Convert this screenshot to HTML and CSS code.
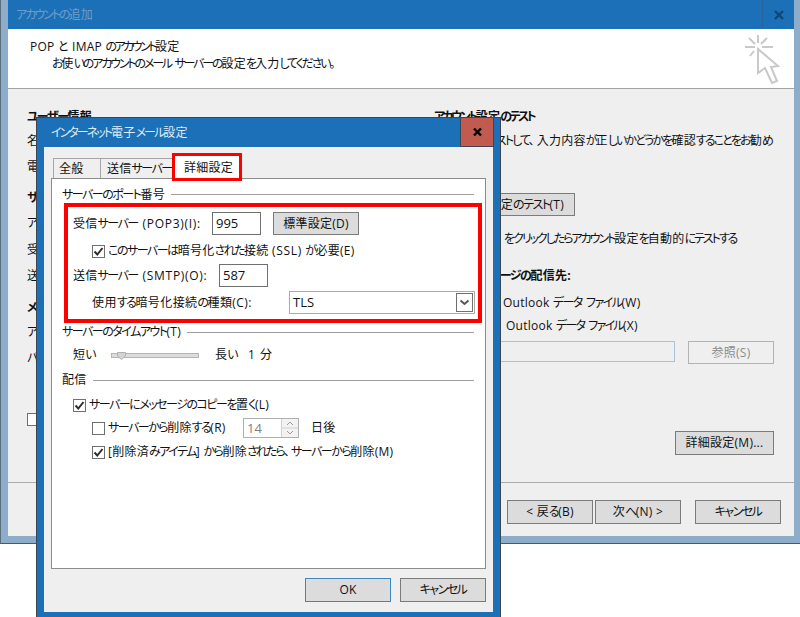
FILE: index.html
```html
<!DOCTYPE html>
<html lang="ja">
<head>
<meta charset="utf-8">
<title>アカウントの追加</title>
<link rel="stylesheet" href="styles.css">
</head>
<body>
<div class="desktop">
  <section class="window back">
    <header class="back-title">
      <span class="back-title-text"><span class="k">アカウントの</span>追加</span>
      <span class="back-close">
        <svg width="10" height="10" viewBox="0 0 10 10"><path d="M1 1L9 9M9 1L1 9" class="x-dim"/></svg>
      </span>
    </header>
    <div class="back-head">
      <div class="back-head-text">
        <div class="head-main">POP と IMAP <span class="k">のアカウント</span>設定</div>
        <div class="head-sub"><span class="k">お</span>使<span class="k">いのアカウントのメール サーバーの</span>設定<span class="k">を</span>入力<span class="k">してください。</span></div>
      </div>
      <svg class="wizard-icon" width="36" height="52" viewBox="0 0 36 52">
        <path class="ray" d="M14 0V8M1 12H11M18 12H29M5 3L11 9M23 3L17 9M6 21L10 16"/>
        <path class="cursor" d="M14 14V38L21 33L28 48L33 46L27 32L34 31Z"/>
      </svg>
    </div>
    <div class="back-body">
      <div class="back-left">
        <div class="bl bold"><span class="k">ユーザー</span>情報</div>
        <div class="bl">名</div>
        <div class="bl">電</div>
        <div class="bl bold">サ</div>
        <div class="bl">ア</div>
        <div class="bl">受</div>
        <div class="bl">送</div>
        <div class="bl bold">メ</div>
        <div class="bl">ア</div>
        <div class="bl">パ</div>
        <div class="bl"><span class="check"></span></div>
      </div>
      <div class="back-right">
        <div class="br bold br-test"><span class="k">アカウント</span>設定<span class="k">のテスト</span></div>
        <div class="br br-rec"><span class="k comma">ストして、</span>入力内容<span class="k">が</span>正<span class="k">しいかどうかを</span>確認<span class="k">することをお</span>勧<span class="k">め</span></div>
        <div class="br br-btn"><span class="btn btn-test"><span>定<span class="k">のテスト</span>(T)</span></span></div>
        <div class="br br-auto"><span class="k">をクリックしたらアカウント</span>設定<span class="k">を</span>自動的<span class="k">にテストする</span></div>
        <div class="br br-dest bold"><span class="k">ージの</span>配信先:</div>
        <div class="br br-new">Outlook <span class="k">データ ファイル</span>(W)</div>
        <div class="br br-old">Outlook <span class="k">データ ファイル</span>(X)</div>
        <div class="br br-browse">
          <span class="browse-input"></span>
          <span class="btn btn-disabled"><span>参照(S)</span></span>
        </div>
        <div class="br br-more"><span class="btn btn-more"><span>詳細設定(M)...</span></span></div>
      </div>
    </div>
    <footer class="back-foot">
      <span class="btn btn-nav"><span>&lt; 戻<span class="k">る</span>(B)</span></span>
      <span class="btn btn-nav"><span>次<span class="k">へ</span>(N) &gt;</span></span>
      <span class="btn btn-nav btn-cancel"><span class="k">キャンセル</span></span>
    </footer>
  </section>

  <section class="window dialog">
    <header class="dlg-title">
      <span class="dlg-title-text"><span class="k">インターネット</span>電子<span class="k">メール</span>設定</span>
      <span class="dlg-close">
        <svg width="11" height="10" viewBox="0 0 11 10"><path d="M2 1.5L9 8.5M9 1.5L2 8.5" class="x-dark"/></svg>
      </span>
    </header>
    <div class="dlg-client">
      <nav class="tabs">
        <span class="tab tab-general">全般</span>
        <span class="tab tab-smtp"><span>送信<span class="k">サーバー</span></span></span>
        <span class="tab tab-active">詳細設定</span>
        <span class="tab-mark"></span>
      </nav>
      <div class="page">
        <div class="group-head"><span><span class="k">サーバーのポート</span>番号</span><i></i></div>
        <div class="redbox">
          <div class="row row-in">
            <span class="lab lab-in">受信<span class="k">サーバー</span> <span class="l">(POP3)(I):</span></span>
            <span class="input">995</span>
            <span class="btn btn-default"><span>標準設定(D)</span></span>
          </div>
          <div class="row row-ssl">
            <span class="check on"><svg width="13" height="13" viewBox="0 0 13 13"><path class="tick" d="M2.5 6.5L5.3 9.5L10.5 3"/></svg></span>
            <span class="check-label"><span class="k">このサーバーは</span>暗号化<span class="k">された</span>接続 <span class="l">(SSL)</span> <span class="k">が</span>必要(E)</span>
          </div>
          <div class="row row-out">
            <span class="lab lab-out">送信<span class="k">サーバー</span> <span class="l">(SMTP)(O):</span></span>
            <span class="input">587</span>
          </div>
          <div class="row row-enc">
            <span class="lab lab-enc">使用<span class="k">する</span>暗号化接続<span class="k">の</span>種類(C):</span>
            <span class="select">
              <span class="select-value">TLS</span>
              <span class="select-arrow"><svg width="11" height="7" viewBox="0 0 11 7"><path class="chev" d="M1.5 1.5L5.5 5L9.5 1.5"/></svg></span>
            </span>
          </div>
        </div>
        <div class="group-head"><span><span class="k">サーバーのタイムアウト</span>(T)</span><i></i></div>
        <div class="row row-time">
          <span class="lab lab-short">短<span class="k">い</span></span>
          <span class="slider"><svg class="thumb" width="9" height="8" viewBox="0 0 9 8"><path d="M.5.5H8.5V4L4.5 7.5L.5 4Z"/></svg></span>
          <span class="lab-long">長<span class="k">い</span></span>
          <span class="lab-min">1 分</span>
        </div>
        <div class="group-head head-deliver"><span>配信</span><i></i></div>
        <div class="row row-copy">
          <span class="check on"><svg width="13" height="13" viewBox="0 0 13 13"><path class="tick" d="M2.5 6.5L5.3 9.5L10.5 3"/></svg></span>
          <span class="check-label"><span class="k">サーバーにメッセージのコピーを</span>置<span class="k">く</span>(L)</span>
        </div>
        <div class="row row-del">
          <span class="check"></span>
          <span class="check-label label-del"><span class="k">サーバーから</span>削除<span class="k">する</span>(R)</span>
          <span class="spin">
            <span class="spin-value">14</span>
            <span class="spin-btns">
              <svg width="16" height="18" viewBox="0 0 16 18"><path class="spin-chev" d="M5 6L8 3L11 6M5 12L8 15L11 12"/><path class="spin-sep" d="M0 9H16"/></svg>
            </span>
          </span>
          <span class="days">日後</span>
        </div>
        <div class="row row-deleted">
          <span class="check on"><svg width="13" height="13" viewBox="0 0 13 13"><path class="tick" d="M2.5 6.5L5.3 9.5L10.5 3"/></svg></span>
          <span class="check-label">[削除済<span class="k">みアイテム</span>] <span class="k">から</span>削除<span class="k comma-small">されたら、</span><span class="k">サーバーから</span>削除(M)</span>
        </div>
      </div>
      <div class="dlg-foot">
        <span class="btn btn-ok"><span>OK</span></span>
        <span class="btn btn-ok-cancel"><span class="k">キャンセル</span></span>
      </div>
    </div>
  </section>
</div>
</body>
</html>
```

FILE: styles.css
```css
* { box-sizing: border-box; }
html, body { margin: 0; padding: 0; }
body {
  background: #fff;
  font-family: "Open Sans", "Noto Sans CJK JP", sans-serif;
  font-size: 12px;
  font-feature-settings: "palt";
  letter-spacing: .25px;
  color: #111;
  line-height: 18px;
}
.k { letter-spacing: -1.5px; word-spacing: 2.5px; }
.l { letter-spacing: .7px; }
.comma { padding-right: 4px; }
.comma-small { padding-right: 3px; letter-spacing: -1.9px; }
.desktop { position: relative; width: 800px; height: 617px; overflow: hidden; }
.window { position: absolute; }
.bold { font-weight: 700; }

/* back window */
.back {
  left: 0; top: 0; width: 800px; height: 544px;
  background: #8dadcb;
  border-left: 1px solid #5d6d7c;
  border-bottom: 1px solid #4d5a66;
  padding: 0 6px 7px 7px;
  display: flex; flex-direction: column;
}
.back-title {
  height: 29px; background: #1b70b7;
  display: flex; align-items: center; justify-content: space-between;
  padding-left: 8px;
}
.back-title-text { color: #6f9dc6; }
.back-title-text .k { letter-spacing: -2px; }
.back-close {
  width: 32px; height: 29px; border-left: 1px solid #2c6497;
  display: flex; align-items: center; justify-content: center;
}
.x-dim { stroke: #0e4774; stroke-width: 2.4; fill: none; }
.back-head {
  height: 60px; background: #fff; border-bottom: 1px solid #a3a3a3;
  display: flex; justify-content: space-between; padding: 9px 14px 0 22px;
}
.head-main { line-height: 18px; }
.head-main .k { letter-spacing: -2.5px; }
.head-sub { padding-left: 22px; line-height: 16px; }
.head-sub .k { letter-spacing: -2.15px; }
.wizard-icon { margin-top: -3px; }
.ray { stroke: #c9c9c9; stroke-width: 2; fill: none; }
.cursor { stroke: #c9c9c9; stroke-width: 2; fill: #fff; }
.back-body { flex: 1; background: #efefef; display: flex; padding-top: 19px; }
.back-left {
  width: 426px; padding-left: 19px; display: grid;
  grid-template-rows: 24px 26px 31px 25px 27px 26px 32px 24px 26px 55px 20px;
  align-content: start;
}
.bl { white-space: nowrap; }
.bl .check { display: block; margin-top: 9px; }
.back-right {
  width: 360px; display: grid;
  grid-template-rows: 24px 61px 37px 37px 27px 23px 24px 90px 26px;
  align-content: start;
}
.br { white-space: nowrap; }
.br-test .k { letter-spacing: -2.6px; }
.br-rec { width: 338px; text-align: right; }
.br-rec .k { letter-spacing: -1.9px; }
.btn {
  display: flex; align-items: center; justify-content: center;
  height: 24px; background: #dcdcdc; border: 1px solid #7b7b7b;
  white-space: nowrap; color: #111;
}
.btn-test { width: 141px; height: 23px; justify-content: flex-end; padding-right: 10px; }
.br-auto { padding-left: 70px; }
.br-auto .k { letter-spacing: -2.05px; }
.br-dest { padding-left: 66px; }
.br-new { padding-left: 69px; }
.br-old { padding-left: 72px; }
.br-old .k { letter-spacing: -1.7px; }
.br-browse { display: flex; align-items: flex-start; gap: 13px; padding-left: 16px; }
.browse-input { width: 225px; height: 21px; border: 1px solid #a9c1dc; background: #efefef; }
.btn-disabled { width: 86px; height: 23px; background: #efefef; border-color: #b3b3b3; color: #8c8c8c; }
.br-more { display: flex; justify-content: flex-end; padding-right: 20px; }
.btn-more { width: 99px; }
.back-foot {
  height: 54px; background: #efefef; border-top: 1px solid #ababab;
  display: flex; justify-content: flex-end; align-items: flex-start;
  gap: 2px; padding: 17px 13px 0 0;
}
.btn-nav { width: 86px; }
.btn-cancel { margin-left: 12px; }

/* dialog */
.dialog {
  left: 36px; top: 117px; width: 465px; height: 501px;
  background: #1b70b7;
  border: 1px solid #3b4650; border-bottom: 0;
  padding: 0 7px;
}
.dlg-title { height: 29px; position: relative; display: flex; align-items: center; padding-left: 7px; margin-right: -7px; }
.dlg-title-text { color: #dfeaf4; }
.dlg-title-text .k { letter-spacing: -1.95px; }
.dlg-close {
  position: absolute; right: 6px; top: 0; width: 34px; height: 29px;
  background: #c25b4f; border: 1px solid #3b4650; border-top: 0;
  display: flex; align-items: center; justify-content: center;
}
.x-dark { stroke: #000; stroke-width: 2.4; fill: none; }
.dlg-client {
  height: 465px; background: #efefef; padding: 11px 7px 0 7px;
}
.tabs { display: flex; height: 20px; padding-left: 2px; position: relative; }
.tab {
  height: 20px; background: #efefef; border: 1px solid #a6a6a6; border-bottom: 0;
  display: flex; align-items: center;
}
.tab-general { width: 48px; padding-left: 5px; }
.tab-smtp { width: 71px; border-left: 0; border-right: 0; padding-left: 6px; overflow: hidden; }
.tab-active {
  width: 68px; height: 23px; margin-top: -2px; background: #fff; border: 0; z-index: 2; position: relative;
  padding-left: 12px;
}
.tab-mark {
  position: absolute; left: 121px; top: -5px; width: 70px; height: 28px;
  border: 3px solid #f00; z-index: 3;
}
.page {
  height: 391px; background: #fff; border: 1px solid #8c8c8c;
  padding: 7px 11px 0 10px;
}
.group-head {
  display: flex; align-items: center; gap: 6px; height: 18px; white-space: nowrap;
}
.group-head:first-child { height: 17px; }
.group-head i { flex: 1; height: 1px; background: #a0a0a0; }
.head-deliver { margin-top: 7px; }
.redbox {
  margin: 0 -8px 0 2px; height: 120px; border: 4px solid #f00;
  padding: 5px 0 0 5px;
}
.row { display: flex; align-items: center; white-space: nowrap; }
.row-in { height: 23px; }
.lab-in { width: 139px; }
.lab-in .k, .lab-out .k { margin-right: 1.5px; }
.input {
  width: 49px; height: 23px; border: 1px solid #707070; background: #fff;
  padding-left: 3px; padding-bottom: 2px; display: flex; align-items: center; font-size: 13px; letter-spacing: 0;
}
.btn-default { width: 86px; height: 23px; margin-left: 12px; }
.row-ssl { height: 18px; margin-top: 7px; padding-left: 19px; }
.row-out { height: 23px; margin-top: 4px; }
.lab-out { width: 146px; }
.row-enc { height: 23px; margin-top: 4px; padding-left: 19px; }
.lab-enc { width: 197px; letter-spacing: .4px; }
.select {
  width: 186px; height: 23px; border: 1px solid #ababab; background: #fff;
  display: flex; align-items: center; justify-content: space-between;
  padding: 1px 1px 1px 3px;
}
.select-value { font-size: 13px; letter-spacing: 0; margin-top: -2px; }
.select-arrow {
  width: 17px; height: 19px; border: 1px solid #707070;
  display: flex; align-items: center; justify-content: center;
}
.chev { stroke: #555; stroke-width: 2; fill: none; }
.check {
  display: block; width: 13px; height: 13px; flex: none;
  border: 1px solid #707070; background: #fff; position: relative;
}
.check svg { position: absolute; left: -1px; top: -1px; }
.tick { stroke: #2e2e2e; stroke-width: 2; fill: none; }
.check-label { margin-left: 3px; }
.row-time { height: 18px; margin-top: 5px; padding-left: 11px; }
.lab-short { width: 38px; }
.slider {
  width: 88px; height: 5px; border: 1px solid #b5b5b5; background: #dcdcdc; position: relative;
}
.thumb { position: absolute; left: 5px; top: -2px; fill: #d4d4d4; stroke: #b0b0b0; }
.lab-long { margin-left: 16px; }
.lab-min { margin-left: 11px; letter-spacing: 1px; }
.row-copy { height: 18px; margin-top: 7px; padding-left: 11px; }
.row-del { height: 20px; margin-top: 4px; padding-left: 30px; }
.label-del { width: 135px; }
.spin {
  width: 56px; height: 20px; border: 1px solid #b0b0b0; display: flex; justify-content: space-between;
  align-items: center; padding-left: 3px; background: #fff;
}
.spin-value { color: #808080; font-size: 13px; letter-spacing: 0; }
.spin-btns { width: 17px; height: 18px; border-left: 1px solid #d0d0d0; background: #f2f2f2; display: block; }
.spin-btns svg { display: block; }
.spin-chev { stroke: #9a9a9a; stroke-width: 1; fill: none; }
.spin-sep { stroke: #d0d0d0; }
.days { margin-left: 12px; }
.row-deleted { height: 18px; margin-top: 5px; padding-left: 30px; }
.dlg-foot { display: flex; justify-content: flex-end; gap: 9px; padding-top: 9px; }
.btn-ok, .btn-ok-cancel { width: 86px; height: 24px; }
.btn-ok { border-color: #3f87c0; }
```
